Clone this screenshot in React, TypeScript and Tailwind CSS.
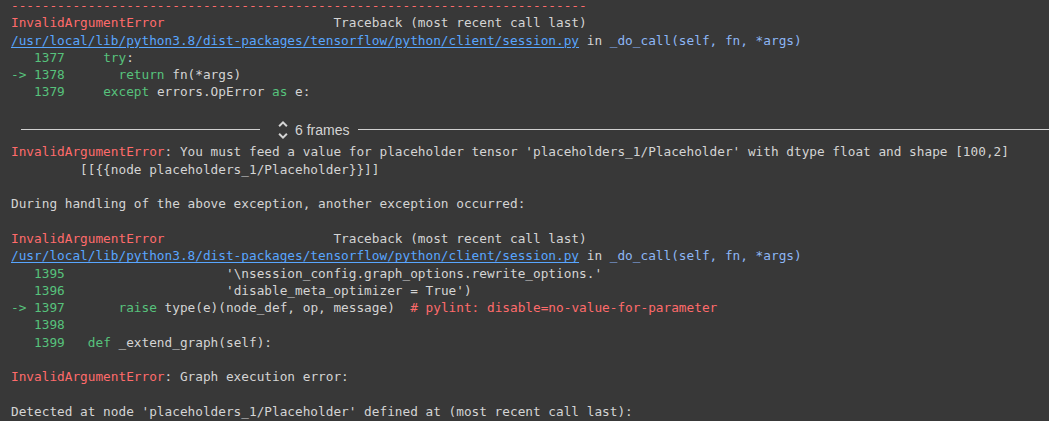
import React from "react";

const R = ({ children }: { children: React.ReactNode }) => (
  <span className="text-[#ff6b6b]">{children}</span>
);
const G = ({ children }: { children: React.ReactNode }) => (
  <span className="text-[#57c27c]">{children}</span>
);
const B = ({ children }: { children: React.ReactNode }) => (
  <span className="text-[#8db6f5]">{children}</span>
);
const Link = () => (
  <span className="text-[#58a6ff] underline underline-offset-2">
    /usr/local/lib/python3.8/dist-packages/tensorflow/python/client/session.py
  </span>
);

const Line = ({ children }: { children?: React.ReactNode }) => (
  <div className="h-[17.3px] whitespace-pre">{children ?? " "}</div>
);

const TraceHead = () => (
  <>
    <Line>
      <R>InvalidArgumentError</R>
      {"                      Traceback (most recent call last)"}
    </Line>
    <Line>
      <Link />
      {" in "}
      <B>_do_call(self, fn, *args)</B>
    </Line>
  </>
);

export default function App() {
  return (
    <div className="min-h-screen w-full overflow-hidden bg-[#383838] text-[#d4d4d4]">
      <div
        className="pl-[11px] text-[12.76px] leading-[17.3px]"
        style={{ fontFamily: '"DejaVu Sans Mono", monospace' }}
      >
        <div className="h-[14.3px] whitespace-pre leading-[11px]">
          <R>{"-".repeat(75)}</R>
        </div>
        <TraceHead />
        <Line>
          {"   "}
          <G>1377</G>
          {"     "}
          <G>try</G>:
        </Line>
        <Line>
          <G>{"-> 1378"}</G>
          {"       "}
          <G>return</G>
          {" fn(*args)"}
        </Line>
        <Line>
          {"   "}
          <G>1379</G>
          {"     "}
          <G>except</G>
          {" errors.OpError "}
          <G>as</G>
          {" e:"}
        </Line>

        <div className="flex h-[42.7px] flex-col pt-[17px]">
          <div className="flex h-[24px] items-center">
            <div className="ml-[10px] h-px w-[239px] bg-[#d0d0d0]" />
            <svg
              viewBox="0 0 24 24"
              className="ml-[11px] h-[24px] w-[24px] shrink-0"
              fill="#d4d4d4"
            >
              <path d="M12 5.83L15.17 9l1.41-1.41L12 3 7.41 7.59 8.83 9 12 5.83zm0 12.34L8.83 15l-1.41 1.41L12 21l4.59-4.59L15.17 15 12 18.17z" />
            </svg>
            <span
              className="text-[14px] leading-none text-[#d4d4d4]"
              style={{ fontFamily: '"Liberation Sans", Arial, sans-serif' }}
            >
              6 frames
            </span>
            <div className="ml-[9px] h-px flex-1 bg-[#d0d0d0]" />
          </div>
        </div>

        <Line>
          <R>InvalidArgumentError</R>
          {
            ": You must feed a value for placeholder tensor 'placeholders_1/Placeholder' with dtype float and shape [100,2]"
          }
        </Line>
        <Line>{"         [[{{node placeholders_1/Placeholder}}]]"}</Line>
        <Line />
        <Line>During handling of the above exception, another exception occurred:</Line>
        <Line />
        <TraceHead />
        <Line>
          {"   "}
          <G>1395</G>
          {"                     '\\nsession_config.graph_options.rewrite_options.'"}
        </Line>
        <Line>
          {"   "}
          <G>1396</G>
          {"                     'disable_meta_optimizer = True')"}
        </Line>
        <Line>
          <G>{"-> 1397"}</G>
          {"       "}
          <G>raise</G>
          {" type(e)(node_def, op, message)  "}
          <R># pylint: disable=no-value-for-parameter</R>
        </Line>
        <Line>
          {"   "}
          <G>1398</G>
        </Line>
        <Line>
          {"   "}
          <G>1399</G>
          {"   "}
          <G>def</G>
          {" _extend_graph(self):"}
        </Line>
        <Line />
        <Line>
          <R>InvalidArgumentError</R>
          {": Graph execution error:"}
        </Line>
        <Line />
        <Line>
          {"Detected at node 'placeholders_1/Placeholder' defined at (most recent call last):"}
        </Line>
        <Line />
      </div>
    </div>
  );
}
